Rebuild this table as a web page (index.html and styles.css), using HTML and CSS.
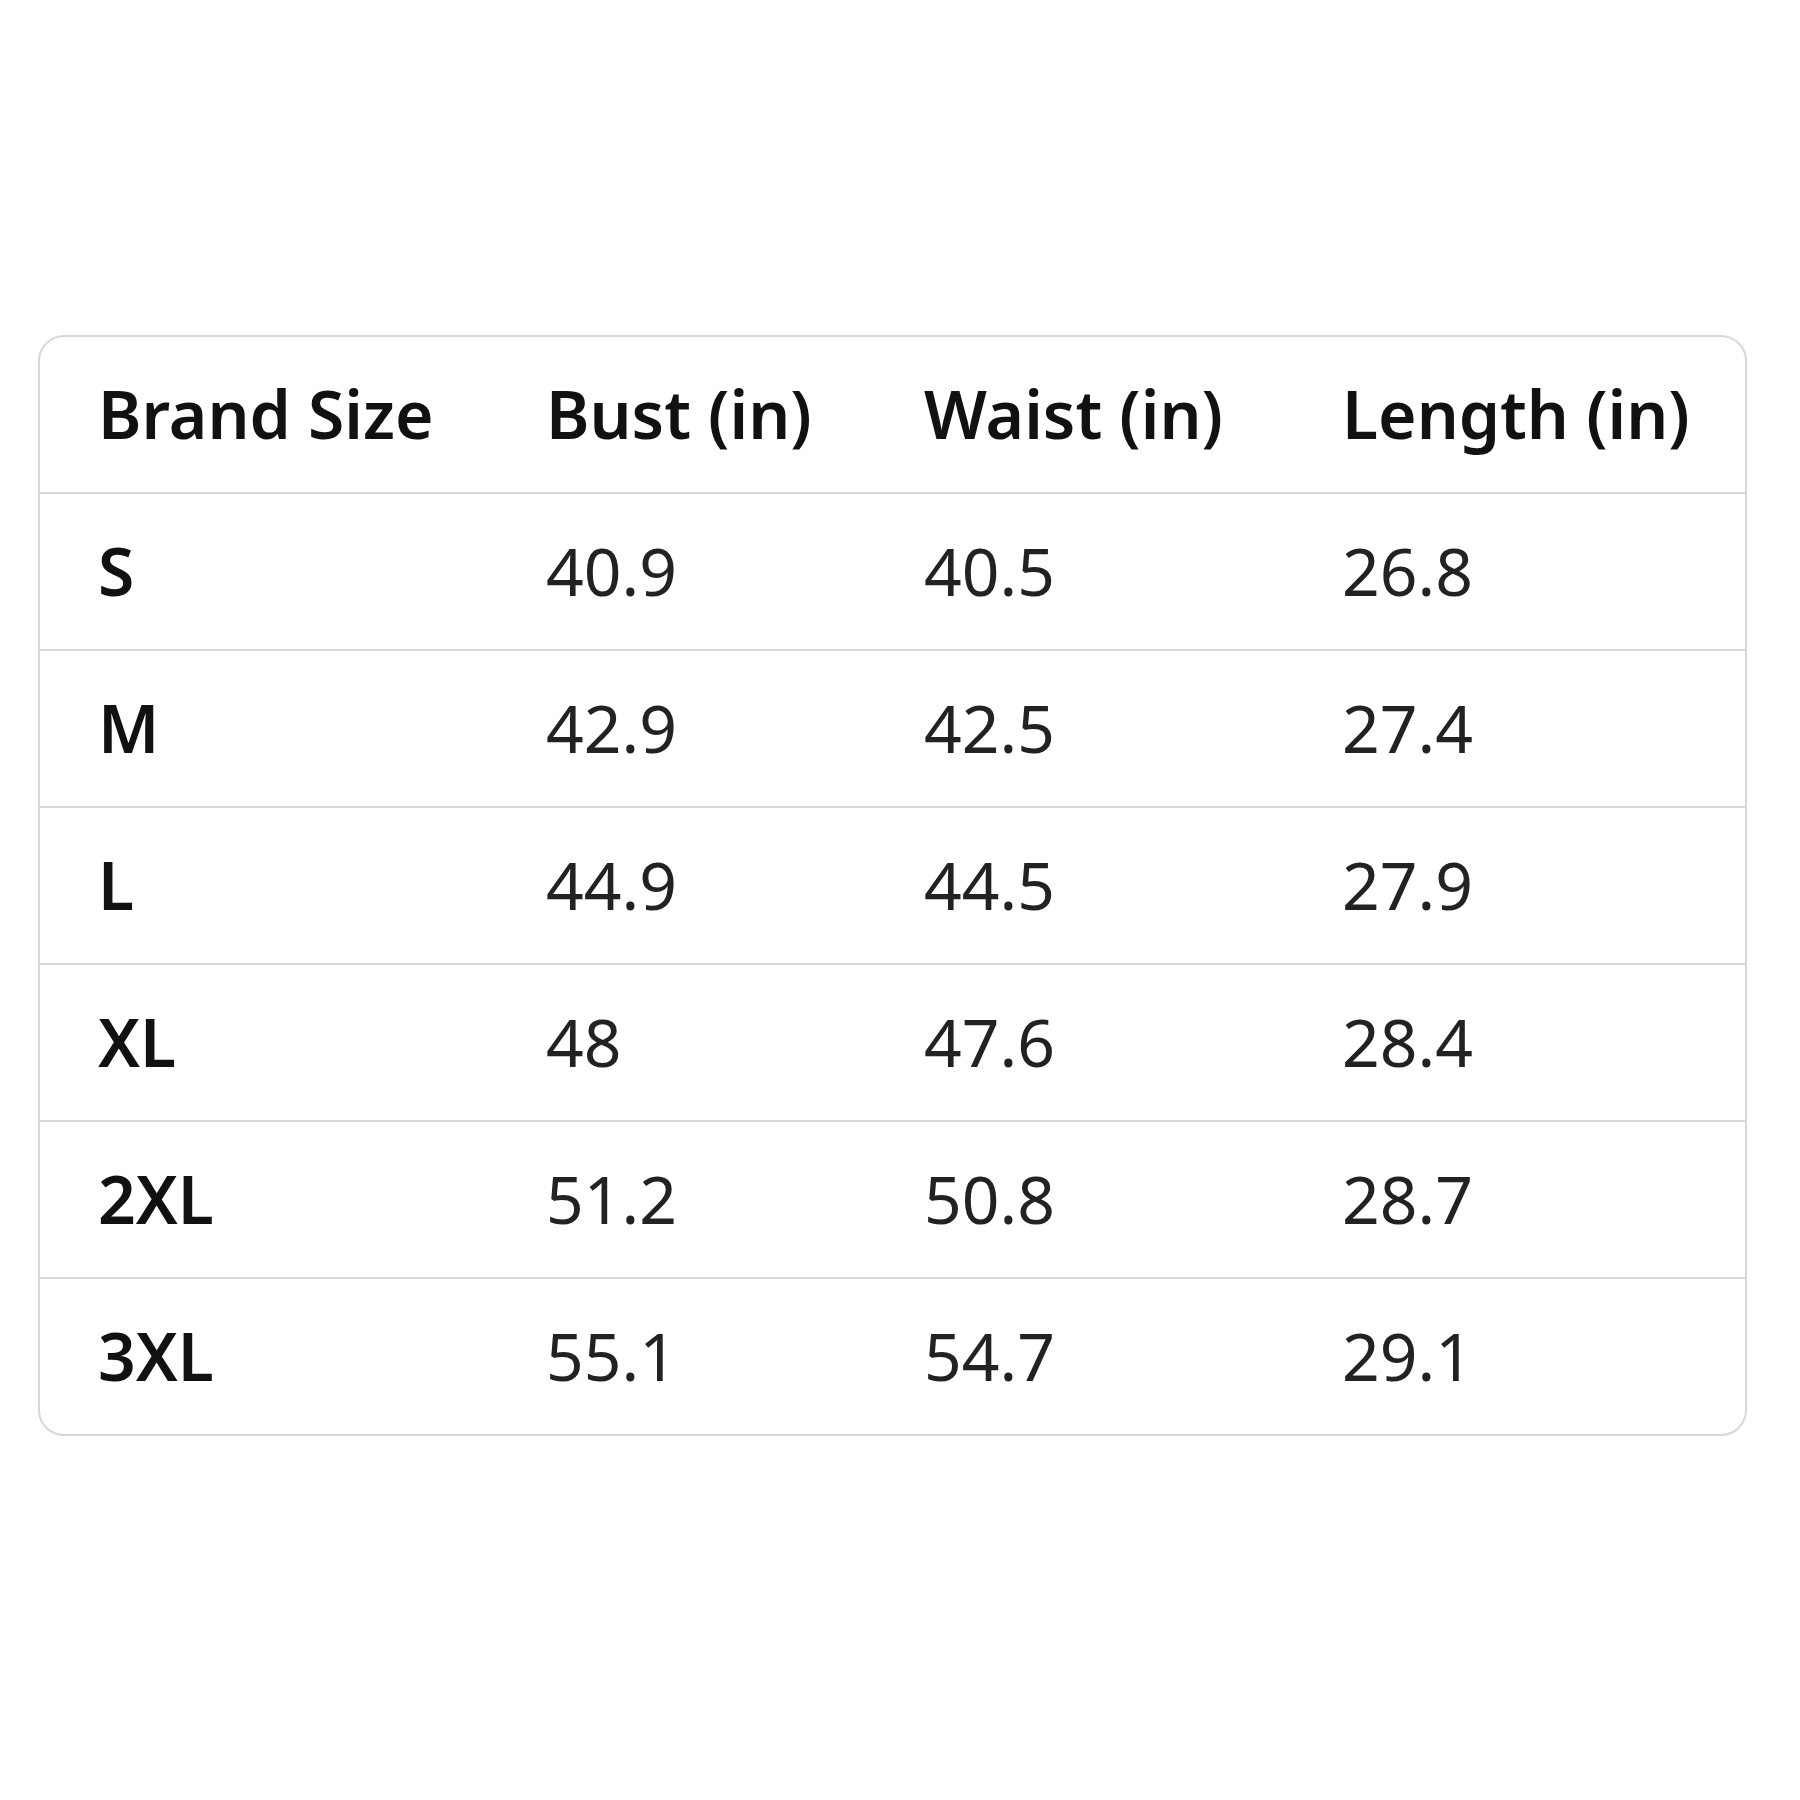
FILE: index.html
```html
<!DOCTYPE html>
<html lang="en">
<head>
<meta charset="utf-8">
<link rel="stylesheet" href="styles.css">
<title>Size chart</title>
</head>
<body>
<div class="page">
  <div class="chart">
    <div class="row head">
      <div class="cell">Brand Size</div>
      <div class="cell">Bust (in)</div>
      <div class="cell">Waist (in)</div>
      <div class="cell">Length (in)</div>
    </div>
    <div class="row"><div class="cell size">S</div><div class="cell">40.9</div><div class="cell">40.5</div><div class="cell">26.8</div></div>
    <div class="row"><div class="cell size">M</div><div class="cell">42.9</div><div class="cell">42.5</div><div class="cell">27.4</div></div>
    <div class="row"><div class="cell size">L</div><div class="cell">44.9</div><div class="cell">44.5</div><div class="cell">27.9</div></div>
    <div class="row"><div class="cell size">XL</div><div class="cell">48</div><div class="cell">47.6</div><div class="cell">28.4</div></div>
    <div class="row"><div class="cell size">2XL</div><div class="cell">51.2</div><div class="cell">50.8</div><div class="cell">28.7</div></div>
    <div class="row last"><div class="cell size">3XL</div><div class="cell">55.1</div><div class="cell">54.7</div><div class="cell">29.1</div></div>
  </div>
</div>
</body>
</html>
```
FILE: styles.css
```css
html, body {
  margin: 0;
  padding: 0;
  background: #ffffff;
}
.page {
  width: 1800px;
  height: 1800px;
  padding: 335px 53px 0 38px;
  box-sizing: border-box;
  font-family: "Noto Sans", "Open Sans", sans-serif;
  color: #111111;
}
.chart {
  border: 2px solid #d5d9d9;
  border-radius: 26px;
  overflow: hidden;
}
.row {
  display: grid;
  grid-template-columns: 448px 378px 418px 1fr;
  height: 155px;
  border-bottom: 2px solid #d5d9d9;
  align-items: center;
}
.row.last {
  border-bottom: none;
}
.cell {
  padding-left: 58px;
  padding-bottom: 3px;
  font-size: 66px;
  font-weight: 400;
  color: #222222;
  white-space: nowrap;
  line-height: 1;
}
.head .cell,
.cell.size {
  font-weight: 600;
  color: #111111;
}
```
